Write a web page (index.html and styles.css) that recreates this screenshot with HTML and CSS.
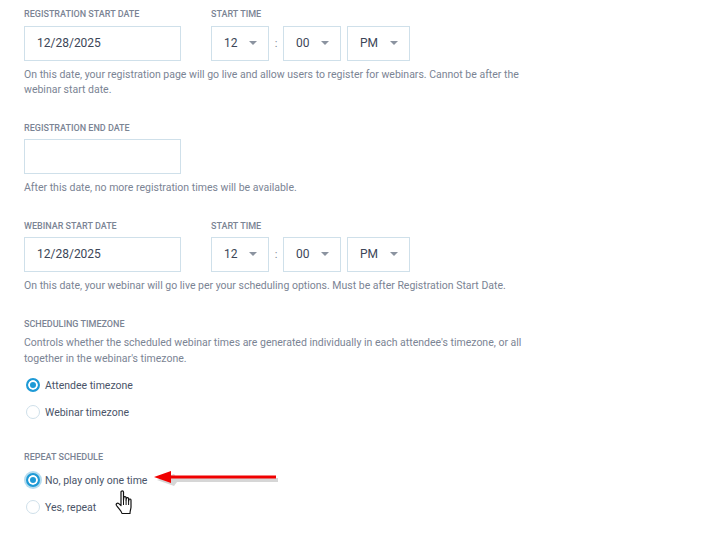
FILE: index.html
```html
<!DOCTYPE html>
<html lang="en">
<head>
    <meta charset="UTF-8">
    <title>Webinar Schedule</title>
    <link rel="stylesheet" href="styles.css">
</head>
<body>
    <div id="container">
        <div class="date-row">
            <div class="date-col">
                <div class="label">REGISTRATION START DATE</div>
                <div class="date-input">12/28/2025</div>
            </div>
            <div class="time-col">
                <div class="label">START TIME</div>
                <div class="time-row">
                    <div class="select small">12<span class="caret"></span></div>
                    <span class="colon">:</span>
                    <div class="select small">00<span class="caret"></span></div>
                    <div class="select ampm">PM<span class="caret"></span></div>
                </div>
            </div>
        </div>
        <p class="help">On this date, your registration page will go live and allow users to register for webinars. Cannot be after the webinar start date.</p>

        <div class="section end-date">
            <div class="label tight">REGISTRATION END DATE</div>
            <div class="date-input"></div>
            <p class="help">After this date, no more registration times will be available.</p>
        </div>

        <div class="date-row section webinar-date">
            <div class="date-col">
                <div class="label tight">WEBINAR START DATE</div>
                <div class="date-input">12/28/2025</div>
            </div>
            <div class="time-col">
                <div class="label tight">START TIME</div>
                <div class="time-row">
                    <div class="select small">12<span class="caret"></span></div>
                    <span class="colon">:</span>
                    <div class="select small">00<span class="caret"></span></div>
                    <div class="select ampm">PM<span class="caret"></span></div>
                </div>
            </div>
        </div>
        <p class="help">On this date, your webinar will go live per your scheduling options. Must be after Registration Start Date.</p>

        <div class="section timezone">
            <div class="label tight">SCHEDULING TIMEZONE</div>
            <p class="help tz-help">Controls whether the scheduled webinar times are generated individually in each attendee's timezone, or all together in the webinar's timezone.</p>
            <div class="radio-row first"><span class="radio on"></span>Attendee timezone</div>
            <div class="radio-row"><span class="radio"></span>Webinar timezone</div>
        </div>

        <div class="section repeat">
            <div class="label">REPEAT SCHEDULE</div>
            <div class="radio-row first-repeat"><span class="radio on focus"></span>No, play only one time</div>
            <div class="radio-row second-repeat"><span class="radio"></span>Yes, repeat</div>
        </div>
    </div>

    <!-- annotation drawn over the screenshot -->
    <svg class="arrow" width="130" height="24" viewBox="0 0 130 24">
        <path d="M4 11 L21 5 L24 9 L125 9 L125 13 L24 13 L21 17 Z" fill="#777" opacity="0.3" transform="translate(2 2)"/>
        <path d="M3 10 L20 4 L20 8.5 L125 8.5 L125 11.5 L20 11.5 L20 16 Z" fill="#f00000"/>
    </svg>
    <svg class="hand" width="20" height="26" viewBox="0 0 20 26">
        <path d="M6 2 C6 0.5 8.5 0.5 8.5 2 L8.5 10 L8.8 7.5 C9 6.3 11 6.3 11.1 7.7 L11.1 10 L11.4 8.4 C11.7 7.2 13.5 7.4 13.6 8.8 L13.6 11 L14 9.6 C14.4 8.6 16 8.9 16 10.2 L16 17 C16 19 15 20 15 23.5 L7 23.5 C6.5 21 4 19 1.5 15.5 C0.5 14 2.4 12.4 3.8 13.6 L6 15.5 Z" fill="#fff" stroke="#111" stroke-width="1.2" stroke-linejoin="round"/>
        <path d="M8.5 10 V15 M11.1 10 V15 M13.6 11 V15" stroke="#111" stroke-width="1" fill="none"/>
    </svg>
</body>
</html>
```

FILE: styles.css
```css
body {
    font-family: Roboto, "Liberation Sans", sans-serif;
    margin: 0;
    padding: 0;
    height: 537px;
    overflow: hidden;
    background-color: #fff;
    position: relative;
}

#container {
    width: 500px;
    padding: 8px 0 0 24px;
}

.label {
    font-size: 9px;
    font-weight: 500;
    line-height: 12px;
    color: #7b8494;
    margin-bottom: 6px;
}

.label.tight {
    margin-bottom: 5px;
}

.date-row {
    display: flex;
}

.date-col {
    width: 187px;
}

.date-input {
    width: 143px;
    height: 33px;
    padding-left: 12px;
    border: 1px solid #cfe0ea;
    font-size: 12px;
    line-height: 33px;
    color: #3c4658;
}

.time-row {
    display: flex;
    align-items: center;
}

.select {
    position: relative;
    height: 33px;
    border: 1px solid #cfe0ea;
    font-size: 12px;
    line-height: 33px;
    color: #3c4658;
    padding-left: 12px;
}

.small {
    width: 44px;
}

.ampm {
    width: 49px;
    margin-left: 6px;
}

.colon {
    width: 14px;
    text-align: center;
    font-size: 11px;
    color: #7b8494;
}

.caret {
    position: absolute;
    right: 11px;
    top: 14px;
    border-left: 4px solid transparent;
    border-right: 4px solid transparent;
    border-top: 4px solid #8b93a0;
}

.help {
    font-size: 10.5px;
    line-height: 15px;
    color: #7b8494;
    margin: 6px 0 0 0;
}

.end-date {
    margin-top: 25px;
}

.webinar-date {
    margin-top: 25px;
}

.timezone {
    margin-top: 25px;
}

.tz-help {
    margin-top: 0;
    line-height: 16px;
}

.radio-row {
    display: flex;
    align-items: center;
    height: 16px;
    margin-top: 11px;
    font-size: 10.5px;
    color: #4a5468;
}

.radio-row.first {
    margin-top: 10px;
}

.repeat {
    margin-top: 31px;
}

.first-repeat {
    margin-top: 9px;
}

.second-repeat {
    margin-top: 11px;
}

.radio {
    box-sizing: border-box;
    width: 14px;
    height: 14px;
    margin: 0 5px 0 2px;
    border: 1px solid #cfe0ea;
    border-radius: 50%;
    background-color: #fff;
}

.radio.on {
    border: 2px solid #1e9ad6;
    background-color: #1e9ad6;
    box-shadow: inset 0 0 0 2px #fff;
}

.radio.focus {
    box-shadow: inset 0 0 0 2px #fff, 0 0 0 2px #b5dcef;
}

.arrow {
    position: absolute;
    left: 151px;
    top: 467px;
}

.hand {
    position: absolute;
    left: 115px;
    top: 490px;
}
```
